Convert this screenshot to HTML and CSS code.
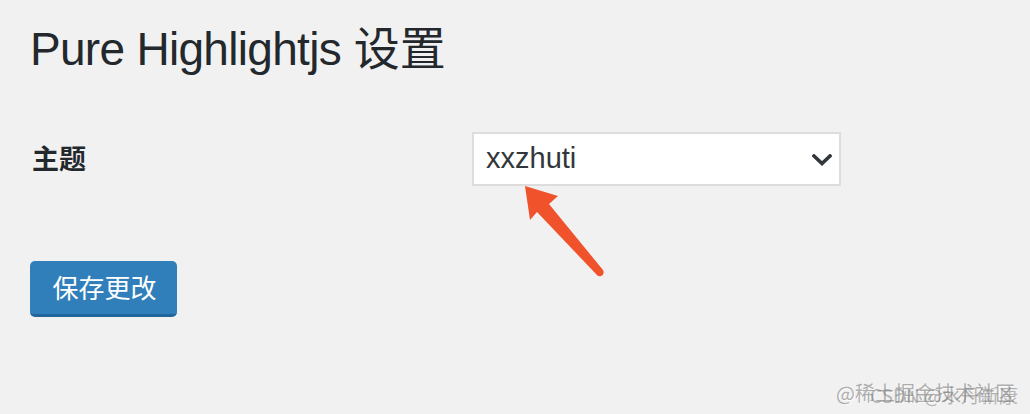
FILE: index.html
```html
<!DOCTYPE html>
<html lang="zh-CN">
<head>
<meta charset="utf-8">
<title>Pure Highlightjs 设置</title>
<link rel="stylesheet" href="styles.css">
</head>
<body>
<div class="wrap">
  <h1 class="title"><span class="latin">Pure Highlightjs</span> 设置</h1>
  <div class="form-row">
    <div class="label">主题</div>
    <div class="select">
      <span class="select-value">xxzhuti</span>
      <svg class="chevron" width="20" height="12" viewBox="0 0 20 12"><polyline points="2,2 10,9.5 18,2" fill="none" stroke="#32373c" stroke-width="3.6" stroke-linecap="square" stroke-linejoin="miter"/></svg>
    </div>
  </div>
  <div class="submit-row">
    <button class="button-primary" type="button">保存更改</button>
  </div>
</div>
<svg class="annot-arrow" width="100" height="100" viewBox="0 0 100 100">
  <path d="M2,2 L35,12 L26,20 L80,86 Q82,90 78,92 Q75,93 73,90 L14,28 L7,36 Z" fill="#f0532b"/>
</svg>
<div class="watermark">
  <span class="wm-a">@稀土掘金技术社区</span>
  <span class="wm-b">CSDN @水丹新康</span>
</div>
</body>
</html>
```

FILE: styles.css
```css
html, body {
  margin: 0;
  padding: 0;
}
body {
  background: #f1f1f1;
  width: 1030px;
  height: 414px;
  overflow: hidden;
  position: relative;
  font-family: "Liberation Sans", "Noto Sans CJK SC", sans-serif;
  color: #23282d;
}
.wrap {
  padding: 19px 0 0 30px;
}
.title {
  margin: 0;
  font-size: 46px;
  line-height: 60px;
  font-weight: 400;
  color: #23282d;
}
.title .latin {
  letter-spacing: -0.7px;
}
.form-row {
  display: flex;
  align-items: flex-start;
  margin-top: 53px;
}
.label {
  width: 442px;
  padding-left: 2px;
  box-sizing: border-box;
  font-family: "Noto Sans CJK SC", sans-serif;
  font-weight: 700;
  font-size: 27px;
  line-height: 52px;
  color: #23282d;
}
.select {
  width: 369px;
  height: 54px;
  box-sizing: border-box;
  border: 2px solid #dddddd;
  background: #ffffff;
  display: flex;
  align-items: center;
  justify-content: space-between;
  padding: 0 7px 0 12px;
}
.select-value {
  font-size: 29px;
  color: #32373c;
  line-height: 1;
  padding-bottom: 1px;
}
.chevron {
  display: block;
  margin-top: 1px;
}
.submit-row {
  margin-top: 75px;
}
.button-primary {
  margin: 0;
  width: 147px;
  height: 56px;
  box-sizing: border-box;
  border: 0;
  border-bottom: 3px solid #21669a;
  border-radius: 5px;
  background: #317fba;
  color: #ffffff;
  font-family: "Noto Sans CJK SC", sans-serif;
  font-size: 26px;
  line-height: 1;
  padding: 0 0 2px 2px;
  cursor: pointer;
}
.annot-arrow {
  position: absolute;
  left: 523px;
  top: 184px;
}
.watermark {
  position: absolute;
  left: 836px;
  top: 378px;
  width: 184px;
  height: 30px;
  font-family: "Noto Sans CJK SC", sans-serif;
  font-size: 20px;
  line-height: 30px;
  white-space: nowrap;
}
.wm-a {
  position: absolute;
  left: 0;
  top: 0;
  color: rgba(150, 150, 150, 0.75);
  text-shadow: 1px 1px 0 rgba(255, 255, 255, 0.8);
}
.wm-b {
  position: absolute;
  left: 34px;
  top: 2px;
  font-size: 19px;
  color: rgba(120, 120, 120, 0.5);
}
```
